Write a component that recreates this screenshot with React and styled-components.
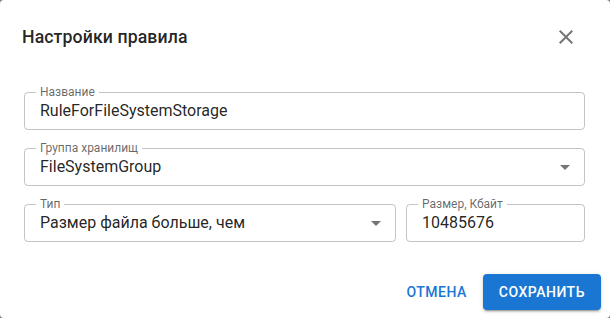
import styled, { createGlobalStyle } from "styled-components"

const Global = createGlobalStyle`
  html, body {
    margin: 0;
    padding: 0;
    background: #7d7d7d;
  }
  body {
    font-family: Roboto, "Noto Sans", "Liberation Sans", sans-serif;
  }
`

const Dialog = styled.div`
  width: 610px;
  height: 318px;
  background: #fff;
  border-radius: 4px;
  box-sizing: border-box;
  display: flex;
  flex-direction: column;
  overflow: hidden;
`

const Header = styled.div`
  display: flex;
  align-items: center;
  justify-content: space-between;
  padding: 21px 24px 0 22px;
  height: 32px;
`

const Title = styled.h2`
  margin: 0;
  font-size: 17.7px;
  font-weight: 500;
  letter-spacing: 0.1px;
  color: rgba(0, 0, 0, 0.87);
`

const CloseButton = styled.button`
  width: 40px;
  height: 40px;
  border: 0;
  background: none;
  padding: 0;
  display: flex;
  align-items: center;
  justify-content: center;
  color: rgba(0, 0, 0, 0.54);
  cursor: pointer;
`

const Content = styled.div`
  display: flex;
  flex-direction: column;
  gap: 12px;
  padding: 33px 25px 0 24px;
`

const Row = styled.div`
  display: grid;
  grid-template-columns: ${p => p.$cols || "1fr"};
  gap: 10px;
`

const Outline = styled.fieldset`
  margin: 0;
  padding: 0 ${p => (p.$select ? "7px" : "15px")} 0 15px;
  border: 1px solid rgba(0, 0, 0, 0.23);
  border-radius: 4px;
  min-width: 0;
`

const Legend = styled.legend`
  margin-left: -4px;
  padding: 0 4px;
  font-size: 12px;
  line-height: 12px;
  color: rgba(0, 0, 0, 0.6);
`

const Inner = styled.div`
  display: flex;
  align-items: center;
  justify-content: space-between;
  height: 37px;
  margin-top: -6px;
`

const Value = styled.span`
  font-size: 16px;
  color: rgba(0, 0, 0, 0.87);
  white-space: nowrap;
`

const Actions = styled.div`
  margin-top: auto;
  display: flex;
  justify-content: flex-end;
  align-items: center;
  gap: 8px;
  padding: 0 9px 8px 0;
`

const Button = styled.button`
  font-family: inherit;
  font-size: 14px;
  font-weight: 500;
  letter-spacing: 0.5px;
  text-transform: uppercase;
  height: 36px;
  border: 0;
  border-radius: 4px;
  cursor: pointer;
  padding: ${p => (p.$contained ? "0 16px" : "0 8px")};
  background: ${p => (p.$contained ? "#1976d2" : "transparent")};
  color: ${p => (p.$contained ? "#fff" : "#1976d2")};
  box-shadow: ${p =>
    p.$contained
      ? "0px 3px 1px -2px rgba(0,0,0,0.2), 0px 2px 2px 0px rgba(0,0,0,0.14), 0px 1px 5px 0px rgba(0,0,0,0.12)"
      : "none"};
`

const ArrowDown = () => (
  <svg width="24" height="24" viewBox="0 0 24 24" fill="rgba(0,0,0,0.54)">
    <path d="M7 10l5 5 5-5z" />
  </svg>
)

const CloseIcon = () => (
  <svg width="24" height="24" viewBox="0 0 24 24" fill="currentColor">
    <path d="M19 6.41 17.59 5 12 10.59 6.41 5 5 6.41 10.59 12 5 17.59 6.41 19 12 13.41 17.59 19 19 17.59 13.41 12z" />
  </svg>
)

function TextField({ label, value, select }) {
  return (
    <Outline $select={select}>
      <Legend>{label}</Legend>
      <Inner>
        <Value>{value}</Value>
        {select && <ArrowDown />}
      </Inner>
    </Outline>
  )
}

export default function App() {
  return (
    <>
      <Global />
      <Dialog>
        <Header>
          <Title>Настройки правила</Title>
          <CloseButton aria-label="close">
            <CloseIcon />
          </CloseButton>
        </Header>
        <Content>
          <Row>
            <TextField label="Название" value="RuleForFileSystemStorage" />
          </Row>
          <Row>
            <TextField label="Группа хранилищ" value="FileSystemGroup" select />
          </Row>
          <Row $cols="1fr 179px">
            <TextField label="Тип" value="Размер файла больше, чем" select />
            <TextField label="Размер, Кбайт" value="10485676" />
          </Row>
        </Content>
        <Actions>
          <Button>Отмена</Button>
          <Button $contained>Сохранить</Button>
        </Actions>
      </Dialog>
    </>
  )
}
